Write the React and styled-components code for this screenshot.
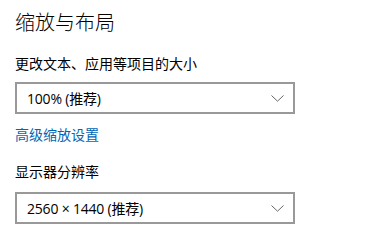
import React from "react";
import styled, { createGlobalStyle } from "styled-components";

const Global = createGlobalStyle`
  html, body { margin: 0; padding: 0; background: #fff; }
  body { font-family: "Open Sans", "Noto Sans CJK SC", sans-serif; color: #000; }
`;

const Page = styled.div`
  padding: 8px 0 0 15px;
  display: flex;
  flex-direction: column;
  align-items: flex-start;
`;

const Title = styled.h1`
  margin: 0;
  font-family: "Noto Sans CJK SC", sans-serif;
  font-size: 20px;
  font-weight: 300;
  line-height: 28px;
  height: 28px;
`;

const Label = styled.div`
  font-family: "Noto Sans CJK SC", sans-serif;
  font-size: 14px;
  line-height: 20px;
  height: 20px;
  margin-top: ${(p) => p.$top}px;
`;

const Select = styled.div`
  box-sizing: border-box;
  width: 280px;
  height: 32px;
  border: 2px solid #999;
  margin-top: ${(p) => p.$top}px;
  display: flex;
  align-items: center;
  justify-content: space-between;
  padding: 0 9px 0 10px;
  font-size: 14px;
  letter-spacing: -0.2px;
`;

const Link = styled.a`
  font-family: "Noto Sans CJK SC", sans-serif;
  font-size: 14px;
  line-height: 20px;
  height: 20px;
  color: #0066b4;
  margin-top: 10px;
  text-decoration: none;
`;

const Chevron = () => (
  <svg width="13" height="7" viewBox="0 0 13 7">
    <path d="M0.5 0.5 L6.5 6.2 L12.5 0.5" fill="none" stroke="#666" strokeWidth="1" />
  </svg>
);

export default function App() {
  return (
    <>
      <Global />
      <Page>
        <Title>缩放与布局</Title>
        <Label $top={17}>更改文本、应用等项目的大小</Label>
        <Select $top={9}>
          <span>100% (推荐)</span>
          <Chevron />
        </Select>
        <Link href="#">高级缩放设置</Link>
        <Label $top={17}>显示器分辨率</Label>
        <Select $top={11}>
          <span>2560 × 1440 (推荐)</span>
          <Chevron />
        </Select>
      </Page>
    </>
  );
}
